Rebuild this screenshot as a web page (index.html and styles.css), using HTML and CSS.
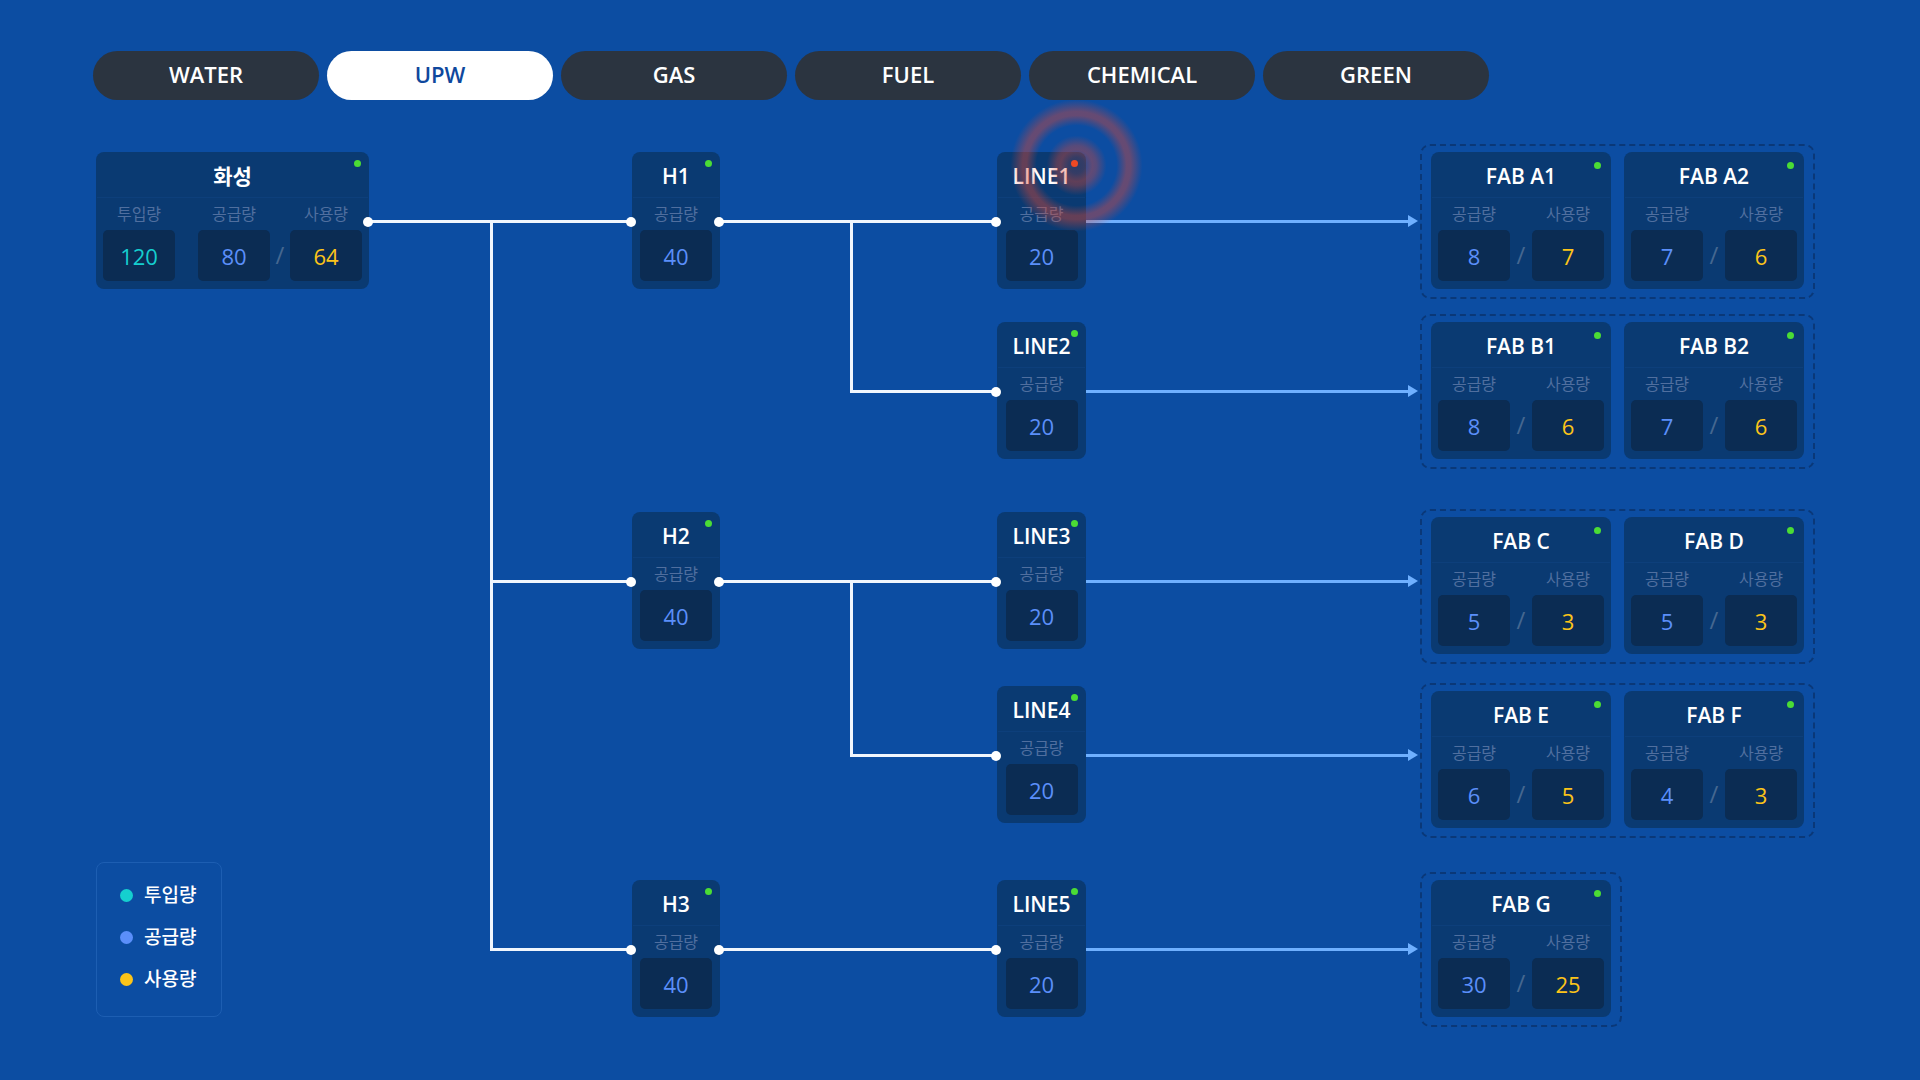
FILE: index.html
```html
<!DOCTYPE html>
<html lang="ko">
<head>
<meta charset="utf-8">
<meta name="viewport" content="width=device-width, initial-scale=1">
<title>UPW</title>
<link rel="stylesheet" href="styles.css">
</head>
<body>
<nav class="tabs">
  <button class="tab" type="button">WATER</button>
  <button class="tab tab-active" type="button" aria-current="page">UPW</button>
  <button class="tab" type="button">GAS</button>
  <button class="tab" type="button">FUEL</button>
  <button class="tab" type="button">CHEMICAL</button>
  <button class="tab" type="button">GREEN</button>
</nav>

<main class="flow">
  <section class="card site row-1">
    <i class="status"></i>
    <h2 class="name">화성</h2>
    <div class="metrics">
      <div class="metric input"><span class="label">투입량</span><span class="value">120</span></div>
      <div class="metric supply"><span class="label">공급량</span><span class="value">80</span></div>
      <span class="slash">/</span>
      <div class="metric usage"><span class="label">사용량</span><span class="value">64</span></div>
    </div>
  </section>

  <!-- site to halls -->
  <i class="trunk trunk-site"></i>
  <i class="wire from-site both row-1"></i>
  <i class="wire from-site branch row-3"></i>
  <i class="wire from-site branch row-5"></i>

  <section class="card hall row-1">
    <i class="status"></i>
    <h2 class="name">H1</h2>
    <div class="metrics"><div class="metric supply"><span class="label">공급량</span><span class="value">40</span></div></div>
  </section>
  <section class="card hall row-3">
    <i class="status"></i>
    <h2 class="name">H2</h2>
    <div class="metrics"><div class="metric supply"><span class="label">공급량</span><span class="value">40</span></div></div>
  </section>
  <section class="card hall row-5">
    <i class="status"></i>
    <h2 class="name">H3</h2>
    <div class="metrics"><div class="metric supply"><span class="label">공급량</span><span class="value">40</span></div></div>
  </section>

  <!-- halls to lines -->
  <i class="trunk trunk-h1"></i>
  <i class="trunk trunk-h2"></i>
  <i class="wire from-hall both row-1"></i>
  <i class="wire from-hall branch row-2"></i>
  <i class="wire from-hall both row-3"></i>
  <i class="wire from-hall branch row-4"></i>
  <i class="wire from-hall both row-5"></i>

  <section class="card line row-1">
    <i class="status status-alert"></i>
    <h2 class="name">LINE1</h2>
    <div class="metrics"><div class="metric supply"><span class="label">공급량</span><span class="value">20</span></div></div>
  </section>
  <section class="card line row-2">
    <i class="status"></i>
    <h2 class="name">LINE2</h2>
    <div class="metrics"><div class="metric supply"><span class="label">공급량</span><span class="value">20</span></div></div>
  </section>
  <section class="card line row-3">
    <i class="status"></i>
    <h2 class="name">LINE3</h2>
    <div class="metrics"><div class="metric supply"><span class="label">공급량</span><span class="value">20</span></div></div>
  </section>
  <section class="card line row-4">
    <i class="status"></i>
    <h2 class="name">LINE4</h2>
    <div class="metrics"><div class="metric supply"><span class="label">공급량</span><span class="value">20</span></div></div>
  </section>
  <section class="card line row-5">
    <i class="status"></i>
    <h2 class="name">LINE5</h2>
    <div class="metrics"><div class="metric supply"><span class="label">공급량</span><span class="value">20</span></div></div>
  </section>

  <!-- lines to fabs -->
  <i class="arrow row-1"></i>
  <i class="arrow row-2"></i>
  <i class="arrow row-3"></i>
  <i class="arrow row-4"></i>
  <i class="arrow row-5"></i>

  <div class="fabs row-1">
    <section class="card fab">
      <i class="status"></i>
      <h2 class="name">FAB A1</h2>
      <div class="metrics">
        <div class="metric supply"><span class="label">공급량</span><span class="value">8</span></div>
        <span class="slash">/</span>
        <div class="metric usage"><span class="label">사용량</span><span class="value">7</span></div>
      </div>
    </section>
    <section class="card fab">
      <i class="status"></i>
      <h2 class="name">FAB A2</h2>
      <div class="metrics">
        <div class="metric supply"><span class="label">공급량</span><span class="value">7</span></div>
        <span class="slash">/</span>
        <div class="metric usage"><span class="label">사용량</span><span class="value">6</span></div>
      </div>
    </section>
  </div>
  <div class="fabs row-2">
    <section class="card fab">
      <i class="status"></i>
      <h2 class="name">FAB B1</h2>
      <div class="metrics">
        <div class="metric supply"><span class="label">공급량</span><span class="value">8</span></div>
        <span class="slash">/</span>
        <div class="metric usage"><span class="label">사용량</span><span class="value">6</span></div>
      </div>
    </section>
    <section class="card fab">
      <i class="status"></i>
      <h2 class="name">FAB B2</h2>
      <div class="metrics">
        <div class="metric supply"><span class="label">공급량</span><span class="value">7</span></div>
        <span class="slash">/</span>
        <div class="metric usage"><span class="label">사용량</span><span class="value">6</span></div>
      </div>
    </section>
  </div>
  <div class="fabs fabs-low row-3">
    <section class="card fab">
      <i class="status"></i>
      <h2 class="name">FAB C</h2>
      <div class="metrics">
        <div class="metric supply"><span class="label">공급량</span><span class="value">5</span></div>
        <span class="slash">/</span>
        <div class="metric usage"><span class="label">사용량</span><span class="value">3</span></div>
      </div>
    </section>
    <section class="card fab">
      <i class="status"></i>
      <h2 class="name">FAB D</h2>
      <div class="metrics">
        <div class="metric supply"><span class="label">공급량</span><span class="value">5</span></div>
        <span class="slash">/</span>
        <div class="metric usage"><span class="label">사용량</span><span class="value">3</span></div>
      </div>
    </section>
  </div>
  <div class="fabs fabs-low row-4">
    <section class="card fab">
      <i class="status"></i>
      <h2 class="name">FAB E</h2>
      <div class="metrics">
        <div class="metric supply"><span class="label">공급량</span><span class="value">6</span></div>
        <span class="slash">/</span>
        <div class="metric usage"><span class="label">사용량</span><span class="value">5</span></div>
      </div>
    </section>
    <section class="card fab">
      <i class="status"></i>
      <h2 class="name">FAB F</h2>
      <div class="metrics">
        <div class="metric supply"><span class="label">공급량</span><span class="value">4</span></div>
        <span class="slash">/</span>
        <div class="metric usage"><span class="label">사용량</span><span class="value">3</span></div>
      </div>
    </section>
  </div>
  <div class="fabs row-5">
    <section class="card fab">
      <i class="status"></i>
      <h2 class="name">FAB G</h2>
      <div class="metrics">
        <div class="metric supply"><span class="label">공급량</span><span class="value">30</span></div>
        <span class="slash">/</span>
        <div class="metric usage"><span class="label">사용량</span><span class="value">25</span></div>
      </div>
    </section>
  </div>

  <ul class="legend">
    <li class="legend-item input">투입량</li>
    <li class="legend-item supply">공급량</li>
    <li class="legend-item usage">사용량</li>
  </ul>
</main>
</body>
</html>
```
FILE: styles.css
```css
:root {
  --bg: #0c4da2;
  --card: #0a3a72;
  --well: #0b2c53;
  --wire: #f1f6fd;
  --arrow: #6fb0ff;
  --input: #15cfcf;
  --supply: #5b8ffa;
  --usage: #fcc419;
  --wire-y: 68px;
}

* {
  box-sizing: border-box;
}

body {
  margin: 0;
  min-height: 100vh;
  min-width: 1280px;
  background: var(--bg);
  color: #fff;
  font-family: "Open Sans", "Noto Sans CJK KR", sans-serif;
}

/* category tabs */
.tabs {
  display: flex;
  gap: 8px;
  padding: 51px 93px 0;
}

.tab {
  flex: 0 1 226px;
  height: 49px;
  padding: 0 0 3px;
  border: 0;
  border-radius: 25px;
  background: #2b3440;
  color: #fff;
  font: 600 22px/30px "Open Sans", "Noto Sans CJK KR", sans-serif;
  cursor: pointer;
}

.tab-active {
  background: #fff;
  color: #0f489d;
}

/* supply diagram */
.flow {
  display: grid;
  grid-template-columns: 273px 263fr 88px 277fr 89px 334fr 394px;
  grid-template-rows: 170px 190px 174px 194px auto;
  align-items: start;
  padding: 52px 106px 62px 96px;
}

.row-1 { grid-row: 1; }
.row-2 { grid-row: 2; }
.row-3 { grid-row: 3; }
.row-4 { grid-row: 4; }
.row-5 { grid-row: 5; }

.site { grid-column: 1; }
.hall { grid-column: 3; }
.line { grid-column: 5; }
.fabs { grid-column: 7; }

.card {
  position: relative;
  padding: 0 7px 8px;
  border-radius: 8px;
  background: var(--card);
}

.name {
  margin: 0 -6px;
  height: 46px;
  border-bottom: 1px solid #0d3f7b;
  font-size: 21px;
  font-weight: 600;
  line-height: 49px;
  text-align: center;
  white-space: nowrap;
}

.metrics {
  display: flex;
}

.hall .metrics,
.line .metrics {
  justify-content: center;
}

.metric {
  display: flex;
  flex-direction: column;
  width: 72px;
}

.site .input {
  margin-right: 23px;
}

.label {
  color: #506f9f;
  font-size: 16px;
  line-height: 32px;
  text-align: center;
  white-space: nowrap;
}

.value {
  height: 51px;
  border-radius: 5px;
  background: var(--well);
  font-size: 22px;
  line-height: 52px;
  text-align: center;
}

.input .value { color: var(--input); }
.supply .value { color: var(--supply); }
.usage .value { color: var(--usage); }

.slash {
  flex: 1;
  align-self: flex-end;
  color: #456790;
  font-size: 24px;
  line-height: 52px;
  text-align: center;
}

.status {
  position: absolute;
  top: 8px;
  right: 8px;
  width: 7px;
  height: 7px;
  border-radius: 50%;
  background: #4bdc35;
}

.fab .status {
  top: 10px;
  right: 10px;
}

.status-alert {
  z-index: 3;
  background: #f04a22;
}

.status-alert::before {
  content: "";
  position: absolute;
  inset: -61px -65px -65px -61px;
  border-radius: 50%;
  background: radial-gradient(circle closest-side,
    rgba(225, 70, 50, .15) 0, rgba(225, 70, 50, .2) 8px,
    rgba(225, 70, 50, .4) 16px, rgba(225, 70, 50, .35) 20px,
    rgba(225, 70, 50, 0) 30px, rgba(225, 70, 50, 0) 40px,
    rgba(225, 70, 50, .42) 50px, rgba(225, 70, 50, .42) 54px,
    rgba(225, 70, 50, 0) 66px);
}

/* connectors */
.wire,
.arrow {
  position: relative;
  z-index: 1;
  height: 3px;
  margin-top: var(--wire-y);
  background: var(--wire);
}

.from-site,
.trunk-site { grid-column: 2; }

.from-hall,
.trunk-h1,
.trunk-h2 { grid-column: 4; }

.from-hall.branch { margin-left: 47%; }
.from-site.branch { margin-left: 46%; }

.both::before,
.wire::after {
  content: "";
  position: absolute;
  top: -3px;
  right: -4px;
  width: 10px;
  height: 10px;
  border-radius: 50%;
  background: #fff;
}

.both::before {
  right: auto;
  left: -6px;
}

.trunk {
  align-self: stretch;
  width: 3px;
  margin: var(--wire-y) 0 calc(-3px - var(--wire-y)) 47%;
  background: var(--wire);
}

.trunk-site {
  grid-row: 1 / 5;
  margin-left: 46%;
}

.trunk-h1 { grid-row: 1; }
.trunk-h2 { grid-row: 3; }

.arrow {
  grid-column: 6;
  margin-right: 10px;
  background: var(--arrow);
}

.arrow::after {
  content: "";
  position: absolute;
  top: -5px;
  right: -8px;
  border: solid transparent;
  border-width: 6px 0 6px 10px;
  border-left-color: var(--arrow);
}

/* fab groups */
.fabs {
  display: flex;
  justify-self: start;
  gap: 13px;
  margin: -8px 0 -10px;
  padding: 6px 9px 8px;
  border: 2px dashed #0a3878;
  border-radius: 10px;
}

.fabs-low {
  margin-top: -3px;
}

.fab {
  width: 180px;
}

/* legend */
.legend {
  grid-column: 1;
  grid-row: 4 / 6;
  align-self: end;
  justify-self: start;
  margin: 0;
  padding: 11px 25px 16px 23px;
  border: 1px solid #1d5eb2;
  border-radius: 8px;
  list-style: none;
}

.legend-item {
  display: flex;
  align-items: center;
  gap: 11px;
  font-size: 19px;
  font-weight: 500;
  line-height: 42px;
}

.legend-item::before {
  content: "";
  width: 13px;
  height: 13px;
  border-radius: 50%;
}

.legend-item.input::before { background: var(--input); }
.legend-item.supply::before { background: var(--supply); }
.legend-item.usage::before { background: var(--usage); }
```
